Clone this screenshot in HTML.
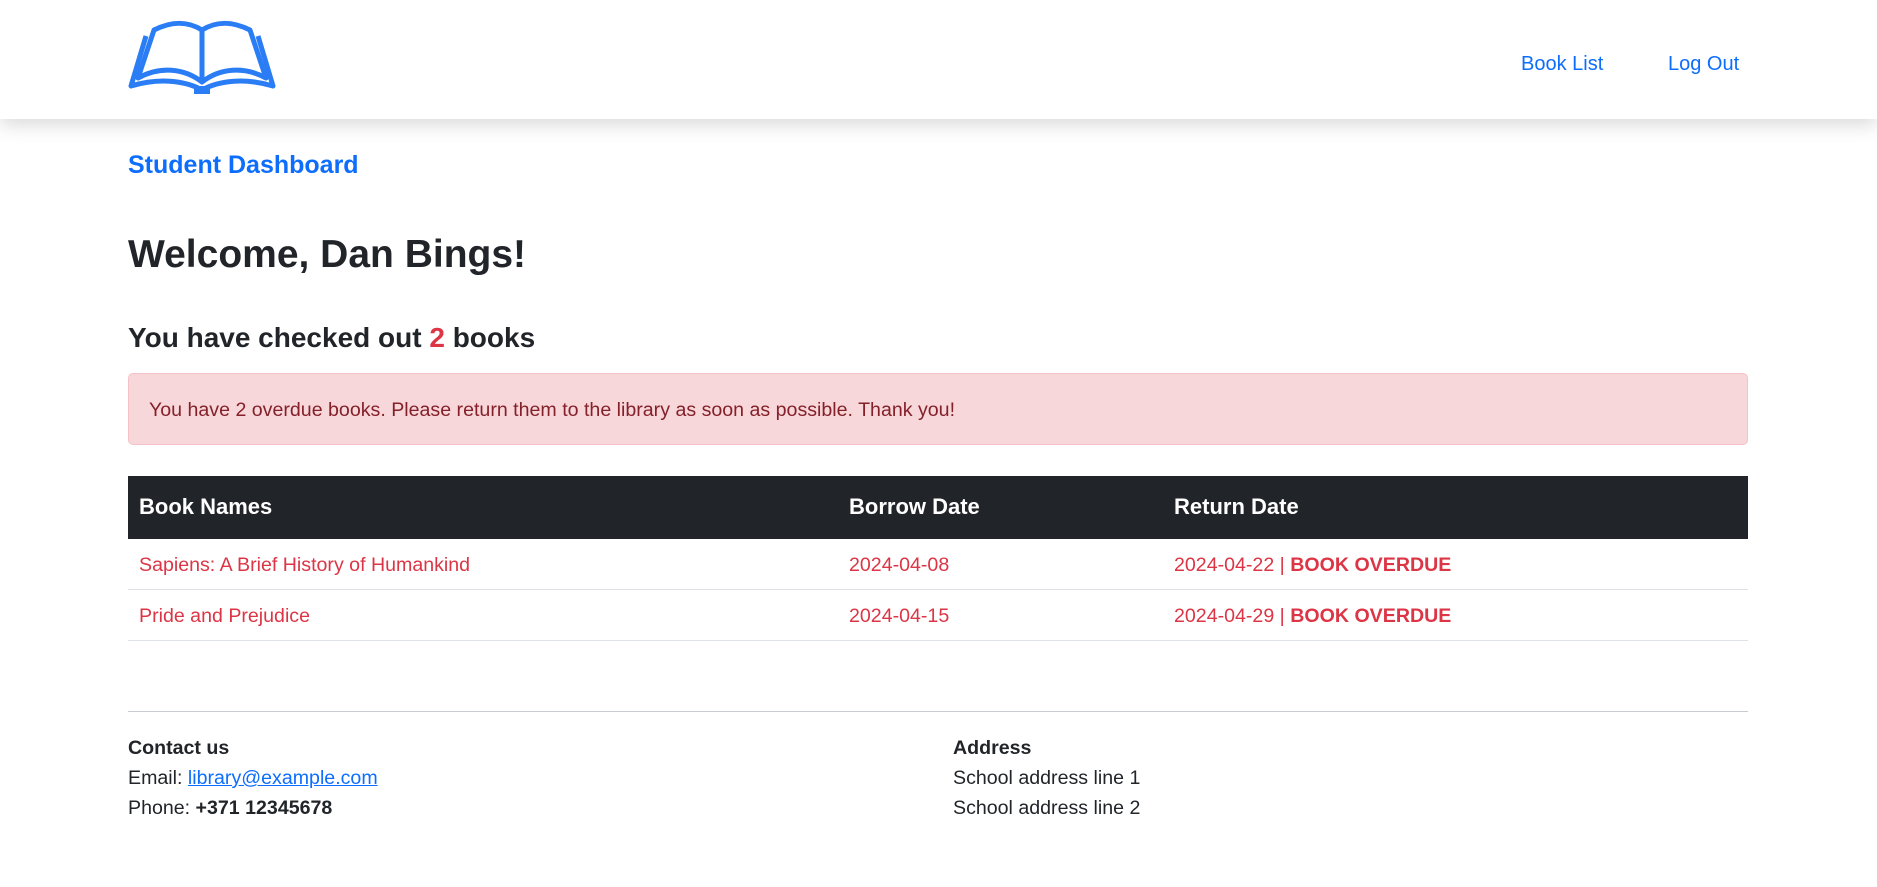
<!DOCTYPE html>
<html><head><meta charset="utf-8"><style>
*{margin:0;padding:0;box-sizing:border-box}
body{width:1877px;height:887px;background:#fff;font-family:"Liberation Sans",sans-serif;color:#212529;position:relative;overflow:hidden}
.hdr{position:absolute;left:0;top:0;width:1877px;height:119px;background:#fff;box-shadow:0 6px 18px rgba(0,0,0,.15);z-index:2}
.a{position:absolute;white-space:nowrap}
.blue{color:#0d6efd}
.red{color:#dc3545}
</style></head><body>
<div class="hdr">
<svg class="a" style="left:128px;top:20px" width="148" height="76" viewBox="0 0 148 76">
<g fill="none" stroke="#2a7df5" stroke-width="5" stroke-linejoin="round">
<path d="M74 10 C58 0 42 2 26 10 L10 58 C32 46 56 48 74 62 C92 48 116 46 138 58 L122 10 C106 2 90 0 74 10 Z"/>
<path d="M74 10 V62"/>
<path d="M18 16 L3 66 C30 58 56 60 74 70 C92 60 118 58 145 66 L130 16"/>
</g>
<rect x="66" y="66" width="16" height="8" fill="#2a7df5"/>
</svg>
<div class="a blue" style="left:1521px;top:53px;font-size:20px">Book List</div>
<div class="a blue" style="left:1668px;top:53px;font-size:20px">Log Out</div>
</div>
<div class="a blue" style="left:128px;top:151px;font-size:25px;font-weight:bold">Student Dashboard</div>
<div class="a" style="left:128px;top:233px;font-size:39px;font-weight:bold">Welcome, Dan Bings!</div>
<div class="a" style="left:128px;top:322px;font-size:28px;font-weight:bold">You have checked out <b class="red">2</b> books</div>
<div class="a" style="left:128px;top:373px;width:1620px;height:72px;background:#f8d7da;border:1px solid #f5c2c7;border-radius:5px"></div>
<div class="a" style="left:149px;top:399px;font-size:19.6px;color:#842029">You have 2 overdue books. Please return them to the library as soon as possible. Thank you!</div>
<div class="a" style="left:128px;top:476px;width:1620px;height:63px;background:#212529"></div>
<div class="a" style="left:139px;top:494px;font-size:22px;font-weight:bold;color:#fff">Book Names</div>
<div class="a" style="left:849px;top:494px;font-size:22px;font-weight:bold;color:#fff">Borrow Date</div>
<div class="a" style="left:1174px;top:494px;font-size:22px;font-weight:bold;color:#fff">Return Date</div>
<div class="a" style="left:128px;top:589px;width:1620px;height:1px;background:#dee2e6"></div>
<div class="a" style="left:128px;top:640px;width:1620px;height:1px;background:#dee2e6"></div>
<div class="a red" style="left:139px;top:554px;font-size:19.6px">Sapiens: A Brief History of Humankind</div>
<div class="a red" style="left:849px;top:554px;font-size:19.6px">2024-04-08</div>
<div class="a red" style="left:1174px;top:554px;font-size:19.6px">2024-04-22 | <b>BOOK OVERDUE</b></div>
<div class="a red" style="left:139px;top:605px;font-size:19.6px">Pride and Prejudice</div>
<div class="a red" style="left:849px;top:605px;font-size:19.6px">2024-04-15</div>
<div class="a red" style="left:1174px;top:605px;font-size:19.6px">2024-04-29 | <b>BOOK OVERDUE</b></div>
<div class="a" style="left:128px;top:711px;width:1620px;height:1px;background:#c8cbcf"></div>
<div class="a" style="left:128px;top:733px;font-size:19.6px;line-height:30px"><b>Contact us</b><br>Email: <span style="color:#0d6efd;text-decoration:underline">library@example.com</span><br>Phone: <b>+371 12345678</b></div>
<div class="a" style="left:953px;top:733px;font-size:19.6px;line-height:30px"><b>Address</b><br>School address line 1<br>School address line 2</div>
</body></html>
